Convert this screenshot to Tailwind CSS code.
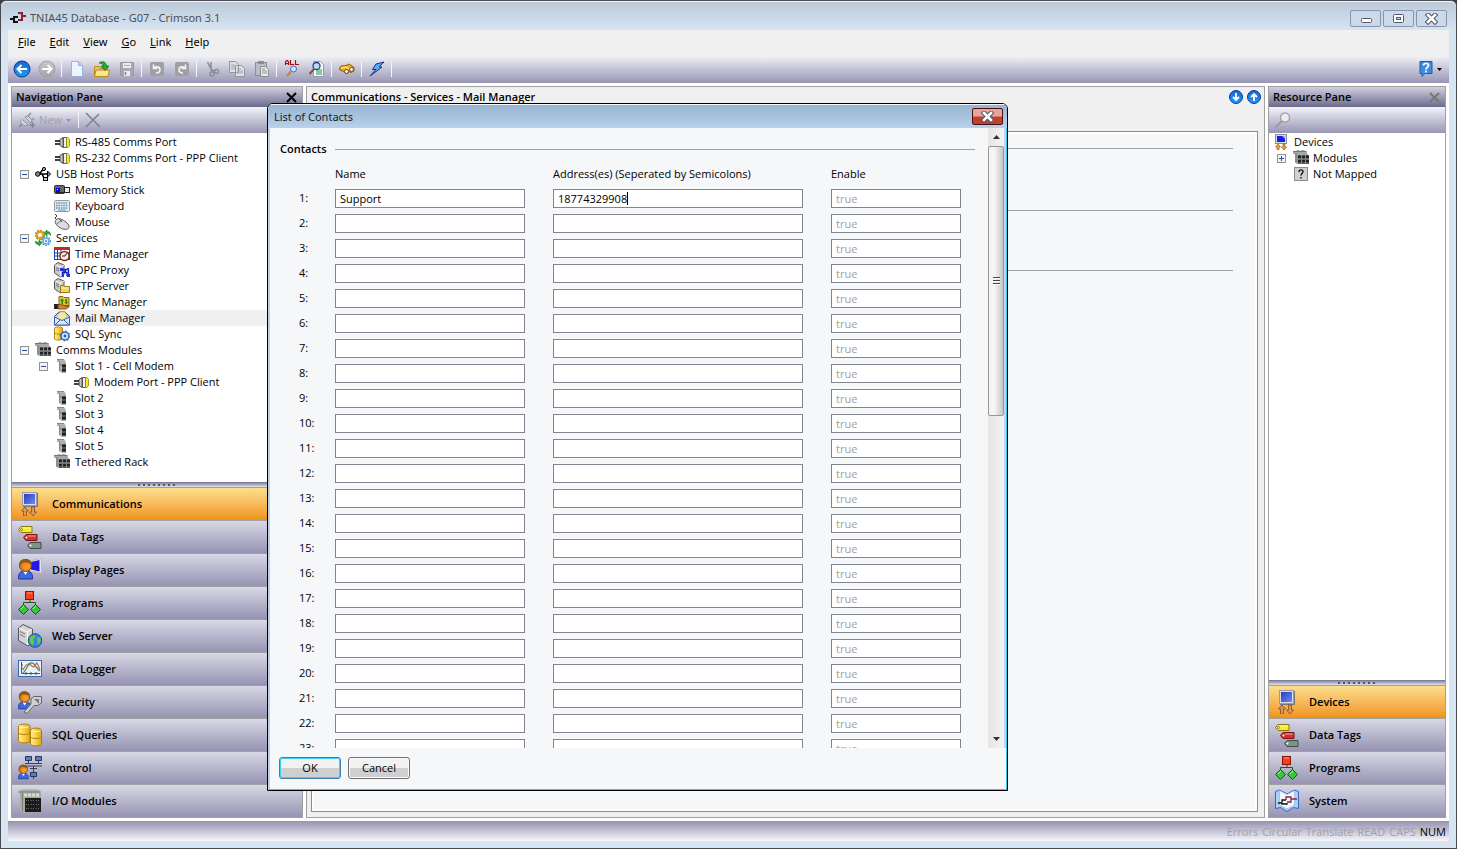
<!DOCTYPE html>
<html lang="en">
<head>
    <meta charset="UTF-8">
    <meta name="viewport" content="width=device-width, initial-scale=1.0">
    <title>TNIA45 Database - G07 - Crimson 3.1</title>
    <script src="https://cdn.jsdelivr.net/npm/@tailwindcss/browser@4"></script>
</head>
<body class="h-screen overflow-hidden bg-[#3c3c44] font-['Open_Sans','Noto_Sans',sans-serif] text-[11px] leading-4 text-black">

    <!-- Icon sprite -->
    <svg class="absolute size-0" aria-hidden="true">
        <defs>
            <linearGradient id="gBlue" x1="0" y1="0" x2="0" y2="1"><stop offset="0" stop-color="#1c64d0"/><stop offset="1" stop-color="#1c9cf4"/></linearGradient>
            <linearGradient id="gGold" x1="0" y1="0" x2="1" y2="0"><stop offset="0" stop-color="#fff2a0"/><stop offset=".5" stop-color="#f7cf45"/><stop offset="1" stop-color="#e0a81c"/></linearGradient>
            <linearGradient id="gScreen" x1="0" y1="0" x2="1" y2="1"><stop offset="0" stop-color="#2a3cc0"/><stop offset="1" stop-color="#6b8af4"/></linearGradient>
            <linearGradient id="gGrey" x1="0" y1="0" x2="0" y2="1"><stop offset="0" stop-color="#c8c8c8"/><stop offset="1" stop-color="#a4a4a4"/></linearGradient>
            <radialGradient id="gHead" cx=".6" cy=".6"><stop offset="0" stop-color="#ffa53c"/><stop offset="1" stop-color="#d97a10"/></radialGradient>
        </defs>

        <symbol id="plug" viewBox="0 0 16 16">
            <path d="M1 7h6M1 10h6" stroke="#000" stroke-width="1.500"/>
            <path d="M6 5.500l3-2v10l-3-2z" fill="#c8c8c8" stroke="#333" stroke-width=".8"/>
            <path d="M9.500 3.500h3v10h-3z" fill="#f0f0f0" stroke="#333" stroke-width=".8"/>
            <path d="M12.500 3.500h1.500l1.500 2v6l-1.500 2h-1.500z" fill="#f8e81c" stroke="#8b8424" stroke-width=".8"/>
        </symbol>
        <symbol id="usb" viewBox="0 0 16 16">
            <path d="M2 8h12M4.500 8l3-4h2M7 8l2 4h2" fill="none" stroke="#000" stroke-width="1.500"/>
            <circle cx="2.800" cy="8" r="2.300" fill="#888" stroke="#000"/><circle cx="9" cy="3" r="1.600" fill="#aaa" stroke="#000"/>
            <path d="M12.500 5l3 3-3 3z" fill="#888" stroke="#000"/><rect x="8.500" y="11.500" width="4" height="3" fill="#ccc" stroke="#000"/>
        </symbol>
        <symbol id="stick" viewBox="0 0 16 16">
            <rect x=".5" y="3.500" width="10" height="8" rx="1" fill="#666" stroke="#333"/><path d="M2 10.500h9" stroke="#222"/>
            <rect x="2" y="6" width="4" height="4" fill="#0000f0"/><rect x="3" y="7" width="1" height="1" fill="#fff"/>
            <rect x="10.500" y="5.500" width="5" height="5" fill="#ececec" stroke="#222"/>
        </symbol>
        <symbol id="keyboard" viewBox="0 0 16 16">
            <rect x=".5" y="2.500" width="15" height="11" rx="1" fill="#e4e8ea" stroke="#999"/>
            <path d="M2 5h12M2 7.500h12M2 10h12" stroke="#5aa0c8" stroke-width="1.400" stroke-dasharray="1.600 .8"/><path d="M4 12h8" stroke="#5aa0c8"/>
        </symbol>
        <symbol id="mouse" viewBox="0 0 16 16">
            <path d="M1 0l2 2-2 2 2 2" fill="none" stroke="#333"/>
            <path d="M1.500 6.500C3 4 6 4 9.500 6.500c4 2 6 5 5.500 7s-4 2.500-7.500 1S0 9 1.500 6.500z" fill="#dcdcdc" stroke="#555"/>
            <path d="M2.500 10l6-4M5 5l3 3" stroke="#777" fill="none"/>
        </symbol>
        <symbol id="gears" viewBox="0 0 16 16">
            <circle cx="5" cy="5" r="3.300" fill="none" stroke="#d8a32c" stroke-width="2.400"/><circle cx="5" cy="5" r="4.700" fill="none" stroke="#b8840c" stroke-width="1.200" stroke-dasharray="1.800 1.300"/>
            <circle cx="11" cy="11" r="3" fill="#e4f2fc" stroke="#6aacdc" stroke-width="1.500"/><circle cx="11" cy="11" r="4.400" fill="none" stroke="#4a90cc" stroke-width="1.200" stroke-dasharray="1.700 1.200"/><circle cx="11" cy="11" r="1" fill="#4a90cc"/>
            <path d="M9 3l3-3v1.500c2 0 4 .5 3.500 4C14.500 4 13.500 3.500 12 4v2z" fill="#2cac2c" stroke="#0a6a0a" stroke-width=".5"/>
            <path d="M7 13l-3 3v-1.500C2 14.500 0 14 .5 11 1.500 12 2.500 12.500 4 12v-2z" fill="#2cac2c" stroke="#0a6a0a" stroke-width=".5"/>
        </symbol>
        <symbol id="calendar" viewBox="0 0 16 16">
            <rect x=".5" y="1.500" width="15" height="12" fill="#fff" stroke="#1a3fa8"/><rect x="0" y="1" width="16" height="3" fill="#c82818"/>
            <path d="M0 7h15M0 10h15M3.500 4v9M7 4v9" stroke="#1a3fa8"/>
            <circle cx="10.500" cy="10" r="4.600" fill="#f4ece8" stroke="#8a2a1a" stroke-width="1.500"/><path d="M8 10h3l2-3" stroke="#222" fill="none"/>
        </symbol>
        <symbol id="tower" viewBox="0 0 16 16">
            <path d="M.5 3L4 .5l6 2.500v9.500L6.500 15l-6-4z" fill="#c8c8c8" stroke="#555"/><path d="M6.500 5v9.500M1 3l5.500 2L10 3" stroke="#f4f4f4" fill="none"/><path d="M2 5.500l3 1.500M2 7.500l3 1.500" stroke="#777"/>
        </symbol>
        <symbol id="opc" viewBox="0 0 16 16">
            <use href="#tower"/>
            <path d="M7 7.500h3v3h3v3h2.500M8.500 13.500v-3h3v-3h3v5" fill="none" stroke="#1020c0" stroke-width="1.300"/>
            <path d="M6 6h3v3H6zM13 12h3v3h-3zM8 12h2v3H8zM13 6h2v2h-2z" fill="#2030e0"/>
        </symbol>
        <symbol id="ftp" viewBox="0 0 16 16">
            <use href="#tower"/><path d="M6.500 7.500h3l1 1h5v6h-9z" fill="#f2d458" stroke="#9a7a14"/><path d="M7 10h8" stroke="#fff2a8"/>
        </symbol>
        <symbol id="sync" viewBox="0 0 16 16">
            <path d="M5 2.500h4l1 1h5v8H5z" fill="#f0bc28" stroke="#8a6a10"/>
            <path d="M8 4.500l2 2.500H9v3H7.500V7H6zM12.500 10.500l-2-2.500h1V5H13v3h1z" fill="#148a28"/>
            <path d="M0 10h4v5H0z" fill="#222"/><path d="M4 10.500l5 .5 3 1.500 3-1v1.500l-3 2H4z" fill="#c88a3c" stroke="#6a3a10" stroke-width=".8"/>
        </symbol>
        <symbol id="mail" viewBox="0 0 16 16">
            <path d="M.5 6.500L5 2h6l4.500 4.500v8.500H.5z" fill="#c8dcf4" stroke="#2e4e96"/>
            <path d="M3 6l3-4h5l2 4v2l-5 3-5-3z" fill="#f4e8a4" stroke="#b4a45c" stroke-width=".6"/>
            <path d="M.5 7L8 10.500 15.500 7v8H.5z" fill="#d8e8fa" stroke="#3a62b0"/><path d="M1 15l5-5M15 15l-5-5" stroke="#3a62b0"/>
        </symbol>
        <symbol id="sqlsync" viewBox="0 0 16 16">
            <path d="M.5 2C2 .5 7 .5 8.500 2V13C7 14.500 2 14.500 .5 13z" fill="url(#gGold)" stroke="#b8860c"/><path d="M.5 7c2 1.500 6 1.500 8 0" fill="none" stroke="#b8860c"/>
            <circle cx="11" cy="10" r="4" fill="#cfe4fa" stroke="#2860b4" stroke-width="1.500"/><circle cx="11" cy="10" r="1.400" fill="#2860b4"/><circle cx="11" cy="10" r="5" fill="none" stroke="#2860b4" stroke-dasharray="1.500 2.400"/>
        </symbol>
        <symbol id="rack" viewBox="0 0 16 16">
            <path d="M0 1h3l1-1h2l1 1 2-1h2l1 1h2v3h1v10H4l-2-2V4H0z" fill="#a8a8a8"/><path d="M0 1.500h13M3 3v10" stroke="#777"/><path d="M5 5h11v9H5z" fill="#555"/>
            <path d="M5 7h3M9 7h3M13 7h3M5 11h3M9 11h3M13 11h3" stroke="#222" stroke-width="2"/><path d="M8.500 5v9M12.500 5v9M5 9h11" stroke="#888"/><path d="M4 4v8" stroke="#6a9a7a"/>
        </symbol>
        <symbol id="slot" viewBox="0 0 16 16">
            <path d="M3 1h7l2 3v11H8l-3-2V4H3z" fill="#b0b0b0"/><path d="M3 1.500h7M5.500 3v10" stroke="#888"/><path d="M8 6h4v8H8z" fill="#555"/><path d="M8 8h4M8 12h4" stroke="#222" stroke-width="2"/><path d="M7 6v2" stroke="#3a9a5a"/>
        </symbol>
        <symbol id="devices16" viewBox="0 0 16 16">
            <rect x="1.500" y=".5" width="11" height="9" fill="#d8dcf0" stroke="#8a8a9c"/><rect x="3" y="2" width="8" height="6" fill="#1820e0"/><path d="M8 2h3v3z" fill="#8aa4f8"/>
            <path d="M4 10l2.500 3H5v3H3v-3H1.500zM10 16l-2.500-3H9v-3h2v3h1.500z" fill="#f4a83c" stroke="#a4580c" stroke-width=".7"/>
        </symbol>
        <symbol id="unmapped" viewBox="0 0 16 16">
            <rect x="1.500" y="1.500" width="13" height="13" fill="#d0d0d0" stroke="#8c8c8c"/><path d="M6 6c0-3 4-2.600 4-.5S8 7.500 8 9.500M8 11v1.500" fill="none" stroke="#111" stroke-width="1.400"/>
        </symbol>

        <symbol id="comms" viewBox="0 0 24 24">
            <rect x="4.500" y=".5" width="14" height="13" fill="#dcdce4" stroke="#9c9ca8"/><rect x="6" y="2" width="11" height="10" fill="url(#gScreen)"/><path d="M19.500 1v13.500H5" fill="none" stroke="#777"/>
            <path d="M7 15l3.500 4H8.500v5h-3v-5h-2zM15 24l-3.500-4h2v-5h3v5h2z" fill="#d89a5c" stroke="#8a4a24" stroke-width=".8"/>
        </symbol>
        <symbol id="tags" viewBox="0 0 24 24">
            <path d="M.5 4.500L3 1.500h11v6H3z" fill="#f8ec28" stroke="#8a7a10"/><path d="M5.500 12.500l2.500-3h11v6H8z" fill="#dc2c2c" stroke="#7a1414"/><path d="M9.500 20.500l2.500-3h11v6H12z" fill="#7c9484" stroke="#3e4e44"/>
            <path d="M5 3h8M10 11h8" stroke="#fff" stroke-opacity=".6"/><circle cx="3.500" cy="4.500" r="1" fill="#fff" stroke="#333" stroke-width=".6"/><circle cx="8.500" cy="12.500" r="1" fill="#fff"/><circle cx="12.500" cy="20.500" r="1" fill="#fff"/>
        </symbol>
        <symbol id="person" viewBox="0 0 24 24">
            <path d="M.5 21c-.5-5 1.500-7.500 5-8h4c3.500.5 5.500 3 5 8z" fill="#3c68e4" stroke="#1c3890"/><path d="M5 13l2.500 4 2.500-4z" fill="#fff"/>
            <circle cx="7.500" cy="7.500" r="6" fill="url(#gHead)" stroke="#7a4408"/><path d="M1.500 9C0 3 4 .8 8 1s6 3 5.500 5C10 5 6 3.500 4 5S3 8 1.500 9z" fill="#8a5a18"/>
        </symbol>
        <symbol id="display" viewBox="0 0 24 24"><path d="M12 3l11.500-2.500V15L12 13z" fill="#e8e8f0" stroke="#bbb"/><path d="M13 4l8.500-2v11.500l-8.500-2z" fill="#2418e8"/><use href="#person"/></symbol>
        <symbol id="programs" viewBox="0 0 24 24">
            <path d="M12 8v3.500M5.500 15v-3.500h12V15" fill="none" stroke="#1c5c1c"/><rect x="7.500" y=".5" width="8" height="8" fill="#f4401c" stroke="#8a1408"/><path d="M9 2h5" stroke="#ff9a7a"/>
            <path d="M5.500 13.500l5 5-5 5-5-5zM17.500 13.500l5 5-5 5-5-5z" fill="#3cc43c" stroke="#0c5c0c"/><path d="M3 18l3-3M15 18l3-3" stroke="#b0f4a0"/>
        </symbol>
        <symbol id="web" viewBox="0 0 24 24">
            <path d="M.5 4L5 .5 14.500 5V18L10 22 .5 16.500z" fill="#d4d4d4" stroke="#555"/><path d="M1 4l8.500 4L14 5M9.500 8v13" fill="none" stroke="#fff"/><path d="M2 7.500l5 2.500M2 10.500L7 13" stroke="#777"/>
            <circle cx="17" cy="16.500" r="6.800" fill="#3c84e4" stroke="#1c4c9c"/><path d="M12 13l4-2 2 1.500-3 3 1 2-1 4-3-3zM19 14l3.500-1v5l-2.500 3z" fill="#5cd03c"/>
        </symbol>
        <symbol id="chart" viewBox="0 0 24 24">
            <rect x=".5" y="3.500" width="23" height="16" fill="#e8f2fc" stroke="#3c68b0"/><path d="M3.500 5v11.500H22" fill="none" stroke="#555"/><path d="M3 8h2M3 12h2M8 15v3M13 15v3M18 15v3" stroke="#555"/>
            <path d="M5 13c3-7 6-7 9-4s4-4 5-3 2 5 3 7" fill="none" stroke="#e06060" stroke-width="1.300"/><path d="M5 16c4-3 4-9 8-10s5 6 9 8" fill="none" stroke="#409850" stroke-width="1.300"/>
        </symbol>
        <symbol id="security" viewBox="0 0 24 24">
            <svg width="21" height="22" viewBox="0 0 24 24"><use href="#person"/></svg>
            <path d="M13 9l3-2.500h7.500V13L20 15.500h-4l-7 8-3-1.500 7-8z" fill="#d0d0d0" stroke="#666"/><path d="M16 9h5v5z" fill="#777"/>
        </symbol>
        <symbol id="queries" viewBox="0 0 24 24">
            <path d="M.5 3C2 .5 10.500 .5 12 3v15C10.500 20.500 2 20.500 .5 18z" fill="url(#gGold)" stroke="#b07c08"/><path d="M.5 10c2 2 9 2 11.500 0" fill="none" stroke="#b07c08"/><path d="M1.500 3.500c2 1.500 7 1.500 9.500 0" fill="none" stroke="#fff6c0"/>
            <path d="M12.500 7c1.500-2.500 9.500-2.500 11 0v14c-1.500 2.500-9.500 2.500-11 0z" fill="url(#gGold)" stroke="#b07c08"/><path d="M12.500 14c2 2 9 2 11 0" fill="none" stroke="#b07c08"/><path d="M13.500 7.500c2 1.500 7 1.500 9 0" fill="none" stroke="#fff6c0"/>
        </symbol>
        <symbol id="control" viewBox="0 0 24 24">
            <path d="M7 7.500h17M7 10h17M10.500 5v2.500M20.500 5v2.500M15.500 10v7M15.500 20v3M12 12.500h7" stroke="#33415c"/>
            <path d="M7.500 .5h6v4h-6zM17.500 .5h6v4h-6zM12.500 16.500h6v4h-6z" fill="#5c7cc4" stroke="#26365c"/>
            <svg y="8" width="17" height="17" viewBox="0 0 24 24"><use href="#person"/></svg>
        </symbol>
        <symbol id="io" viewBox="0 0 24 24">
            <path d="M0 2l4-1.500h16l3 2V23L6 24l-4-2V4H0z" fill="#a8aca0"/><path d="M1 3h21M4.500 4v18" stroke="#7a7e74"/><path d="M7 9h16v14H7z" fill="#1c1c1c"/>
            <path d="M8 11.500h3M13 11.500h3M18 11.500h3M8 15.500h3M13 15.500h3M18 15.500h3M8 19.500h3M13 19.500h3M18 19.500h3" stroke="#666" stroke-dasharray="1 1"/><path d="M6 6h16" stroke="#d8dcd0" stroke-width="3" stroke-dasharray="3 1"/>
        </symbol>
        <symbol id="system" viewBox="0 0 24 24">
            <path d="M.5 2.500l4-1.500 7.500 4L19.500 1l4 1.500v17l-5-1-6.500 4-6.500-4-5 1z" fill="#a8d0f8" stroke="#3468c0"/><path d="M4.500 1.500v14.500l7.500 4 7.500-4V1.500l-7.500 4z" fill="#f4f8fe" stroke="#88a8e0" stroke-width=".6"/>
            <path d="M3 14h4M12 14v1H7v-4h4" fill="none" stroke="#111" stroke-width="1.300"/><path d="M11 11V8h5v5h-4M16 10h6" fill="none" stroke="#8c2434" stroke-width="1.300"/>
        </symbol>
    </svg>

    <!-- Application window -->
    <div class="flex h-screen flex-col rounded-t-md border border-[#4a4a52] bg-[#d7e4f2] px-[7px] pb-[7px]">

        <!-- Title bar -->
        <header class="-mx-[7px] flex h-[29px] shrink-0 items-start rounded-t-md border-t border-white/70 bg-linear-to-b from-[#bccad9] to-[#d7e4f2] pl-[9px] pr-[9px]">
            <svg class="mt-2 h-4 w-4" viewBox="0 0 16 16" aria-hidden="true">
                <path d="M0 9h4M8 12H4V7h4" fill="none" stroke="#111" stroke-width="2"/>
                <path d="M12 6h4M8 3h4v7H8" fill="none" stroke="#8c2030" stroke-width="2"/>
            </svg>
            <h1 class="ml-1 mt-2 font-['Noto_Sans'] text-[#4c5058]">TNIA45 Database - G07 - Crimson 3.1</h1>
            <div class="ml-auto mt-2 flex gap-[2px]">
                <button type="button" aria-label="Minimize" class="flex h-[17px] w-[31px] items-center justify-center rounded-xs border border-[#8795ae] bg-[#ccd9e8]">
                    <svg class="h-3 w-4" viewBox="0 0 16 12"><rect x="3.500" y="5.500" width="10" height="4" rx="1" fill="#fff" stroke="#55586c"/></svg>
                </button>
                <button type="button" aria-label="Maximize" class="flex h-[17px] w-[31px] items-center justify-center rounded-xs border border-[#8795ae] bg-[#ccd9e8]">
                    <svg class="h-3 w-4" viewBox="0 0 16 12"><rect x="2.500" y="1.500" width="10" height="8" rx="1" fill="#fff" stroke="#55586c"/><rect x="5.500" y="4.500" width="4" height="2" fill="#ccd9e8" stroke="#55586c"/></svg>
                </button>
                <button type="button" aria-label="Close" class="flex h-[17px] w-[31px] items-center justify-center rounded-xs border border-[#8795ae] bg-[#ccd9e8]">
                    <svg class="h-3 w-4" viewBox="0 0 16 12"><path d="M4 2l7 7M11 2l-7 7" stroke="#55586c" stroke-width="4.600" stroke-linecap="square"/><path d="M4 2l7 7M11 2l-7 7" stroke="#fff" stroke-width="2.600" stroke-linecap="square"/></svg>
                </button>
            </div>
        </header>

        <!-- Menu bar -->
        <nav class="flex h-[25px] shrink-0 items-center bg-[#f0f0f0] pb-px pl-[3px] font-['Noto_Sans']">
            <button type="button" class="px-[7px]"><u>F</u>ile</button>
            <button type="button" class="px-[7px]"><u>E</u>dit</button>
            <button type="button" class="px-[7px]"><u>V</u>iew</button>
            <button type="button" class="px-[7px]"><u>G</u>o</button>
            <button type="button" class="px-[7px]"><u>L</u>ink</button>
            <button type="button" class="px-[7px]"><u>H</u>elp</button>
        </nav>

        <!-- Toolbar -->
        <div class="flex h-[28px] shrink-0 items-center bg-linear-to-b from-[#f4f4fa] to-[#9896b4] pl-[1px] pr-[7px]">
            <button type="button" aria-label="Back" class="flex w-[25px] justify-center">
                <svg class="size-[18px]" viewBox="0 0 18 18"><circle cx="9" cy="9" r="8" fill="url(#gBlue)" stroke="#0a3c9c"/><path d="M14 9H5M8.500 5L4.500 9l4 4" fill="none" stroke="#fff" stroke-width="2"/></svg>
            </button>
            <button type="button" aria-label="Forward" class="flex w-[25px] justify-center">
                <svg class="size-[18px]" viewBox="0 0 18 18"><circle cx="9" cy="9" r="8" fill="url(#gGrey)" stroke="#a0a0a8"/><path d="M4 9h9M9.500 5l4 4-4 4" fill="none" stroke="#fff" stroke-width="2"/></svg>
            </button>
            <span class="mx-[2px] h-4 w-px bg-[#f4f4fa]"></span>
            <button type="button" aria-label="New" class="flex w-[25px] justify-center">
                <svg class="size-4" viewBox="0 0 16 16"><path d="M2.500.5h7l4 4v11h-11z" fill="#eef4fe" stroke="#98b4dc"/><path d="M9.500.5v4h4" fill="#b8d0f0" stroke="#98b4dc"/></svg>
            </button>
            <button type="button" aria-label="Open" class="flex w-[25px] justify-center">
                <svg class="size-4" viewBox="0 0 16 16"><path d="M.5 5.500h5l1 2h7v8H.5z" fill="#f0c850" stroke="#b88a20"/><path d="M.5 15.500l1.500-6.500h13.500L14 15.500z" fill="#fae48c" stroke="#b88a20"/><path d="M5 2c4-2.500 7-1 7.500 3h2.500l-4 4.500L7 5h2.500C9 3 7.500 2 5 2z" fill="#2cac2c" stroke="#0c6a14" stroke-width=".7"/></svg>
            </button>
            <button type="button" aria-label="Save" class="flex w-[25px] justify-center">
                <svg class="size-4" viewBox="0 0 16 16"><path d="M1.500 1.500h13v13h-13z" fill="#a8a8ae" stroke="#98989f"/><path d="M4 2h8v5H4zM5 10h6v5H5z" fill="#ececf0"/><path d="M5 4.500h6" stroke="#aaa"/><path d="M6.500 11v3" stroke="#888" stroke-width="1.500"/></svg>
            </button>
            <span class="mx-[2px] h-4 w-px bg-[#f4f4fa]"></span>
            <button type="button" aria-label="Undo" class="flex w-[25px] justify-center">
                <svg class="size-4" viewBox="0 0 16 16"><rect x="1" y="1" width="14" height="14" rx="2" fill="#a0a0a4"/><path d="M4.500 3.500v4h4M5 7c3-2.500 6-1 6 1.500S9.500 12 7 12" fill="none" stroke="#f4f4f8" stroke-width="1.600"/></svg>
            </button>
            <button type="button" aria-label="Redo" class="flex w-[25px] justify-center">
                <svg class="size-4" viewBox="0 0 16 16"><rect x="1" y="1" width="14" height="14" rx="2" fill="#a0a0a4"/><path d="M11.500 3.500v4h-4M11 7C8 4.500 5 6 5 8.500S6.500 12 9 12" fill="none" stroke="#f4f4f8" stroke-width="1.600"/></svg>
            </button>
            <span class="mx-[2px] h-4 w-px bg-[#f4f4fa]"></span>
            <button type="button" aria-label="Cut" class="flex w-[25px] justify-center">
                <svg class="size-4" viewBox="0 0 16 16"><path d="M3.500 1l5 10M7 1v8l4 1" fill="none" stroke="#8c8c94" stroke-width="1.600"/><circle cx="8" cy="13" r="2" fill="none" stroke="#8c8c94" stroke-width="1.500"/><circle cx="12.500" cy="10.500" r="2" fill="none" stroke="#8c8c94" stroke-width="1.500"/></svg>
            </button>
            <button type="button" aria-label="Copy" class="flex w-[25px] justify-center">
                <svg class="size-4" viewBox="0 0 16 16"><path d="M.5.5h6l3 3v8h-9zM6.500 4.500h6l3 3v8h-9z" fill="#e0e0e6" stroke="#94949c"/><path d="M2 4h4M2 6h4M2 8h4M8 8h4M8 10h6M8 12h6" stroke="#a4a4ac"/></svg>
            </button>
            <button type="button" aria-label="Paste" class="flex w-[25px] justify-center">
                <svg class="size-4" viewBox="0 0 16 16"><rect x="1.500" y="1.500" width="11" height="13" fill="#bcbcc4" stroke="#8c8c94"/><rect x="4" y="0" width="6" height="3" fill="#8c8c94"/><path d="M6.500 5.500h5l3 3v7h-8z" fill="#e8e8ee" stroke="#8c8c94"/><path d="M8 8h3M8 10h5M8 12h5" stroke="#94949c"/></svg>
            </button>
            <span class="mx-[2px] h-4 w-px bg-[#f4f4fa]"></span>
            <button type="button" aria-label="Find all" class="flex w-[25px] justify-center">
                <svg class="size-4 overflow-visible" viewBox="0 0 16 16"><path d="M1.500 4V1l1-1.500h1l1 1.500v3M1.500 2.500h3M6.500-1v4.500H10M11.500-1v4.500H15" fill="none" stroke="#a01010" stroke-width="1.200"/><circle cx="9.500" cy="8" r="3" fill="#cfe8fc" stroke="#3c70c0"/><path d="M7 10.500l-4 4.500" stroke="#c8803c" stroke-width="2"/></svg>
            </button>
            <button type="button" aria-label="Find in document" class="flex w-[25px] justify-center">
                <svg class="size-4" viewBox="0 0 16 16"><path d="M4.500.5h7l3 3v12h-10z" fill="#f4f8fc" stroke="#8c9cb0"/><path d="M7 9h6M7 11h6M7 13h6" stroke="#1c9c3c"/><circle cx="7.500" cy="5" r="3.500" fill="#bcd8f4" stroke="#26467c" stroke-width="1.300"/><path d="M5 8l-4.500 5" stroke="#7a5a3c" stroke-width="2"/></svg>
            </button>
            <span class="mx-[2px] h-4 w-px bg-[#f4f4fa]"></span>
            <button type="button" aria-label="Browse" class="flex w-[25px] justify-center">
                <svg class="size-4" viewBox="0 0 16 16"><path d="M.5 7L2 5l5-.500L10 3l5 3.500v3.500l-3 1.500-2-1-2 2.500-3-2.500L1 9z" fill="#f0b028" stroke="#8a5c08"/><path d="M2 7l4-1 4 1.500" stroke="#fff0a0" fill="none"/><ellipse cx="12.500" cy="8.500" rx="2" ry="2" fill="#e8f0fc" stroke="#7a4c08"/><circle cx="7.500" cy="10.500" r="2" fill="#e8f0fc" stroke="#7a4c08"/></svg>
            </button>
            <span class="mx-[2px] h-4 w-px bg-[#f4f4fa]"></span>
            <button type="button" aria-label="Download" class="flex w-[25px] justify-center">
                <svg class="size-4" viewBox="0 0 16 16"><path d="M7 3l8-2-5 5h3L1 15l6-6.500H3.500z" fill="#5cacf4" stroke="#12308c"/></svg>
            </button>
            <span class="mx-[2px] h-4 w-px bg-[#f4f4fa]"></span>
            <button type="button" aria-label="Help" class="ml-auto flex items-center gap-[3px]">
                <svg class="size-4" viewBox="0 0 16 16"><path d="M2 .5h12v12H7l-3 3v-3H2z" fill="#3c8ce0" stroke="#1c5cb0"/><path d="M5.500 4.500c0-3 5-2.800 5 0 0 2-2.500 1.800-2.500 4M8 9.500v2" fill="none" stroke="#fff" stroke-width="1.800"/></svg>
                <svg class="h-[3px] w-[5px]" viewBox="0 0 5 3"><path d="M0 0h5L2.500 3z"/></svg>
            </button>
        </div>

        <!-- Panes -->
        <main class="flex min-h-0 flex-1 gap-[3px] bg-white px-[3px] py-[3px]">

            <!-- Navigation pane -->
            <aside class="flex w-[292px] shrink-0 flex-col border border-[#a0a0a0]">
                <div class="flex h-5 shrink-0 items-center justify-between bg-linear-to-b from-[#d2d1e0] to-[#6d6b8d] pl-1 pr-[5px]">
                    <h2 class="font-semibold">Navigation Pane</h2>
                    <button type="button" aria-label="Close navigation pane"><svg class="size-[11px]" viewBox="0 0 11 11"><path d="M1 1l9 9M10 1l-9 9" stroke="#000" stroke-width="2"/></svg></button>
                </div>
                <div class="flex h-[26px] shrink-0 items-center bg-linear-to-b from-[#f4f4fa] to-[#9896b4] pl-[7px] text-[#a0a0a8]">
                    <button type="button" class="flex items-center gap-1">
                        <svg class="size-4" viewBox="0 0 16 16" aria-hidden="true"><path d="M0 15l3-3" stroke="#94949c" stroke-width="2"/><path d="M3.500 7.500l5.500 5.500c-2 1-4 1-6-1s-1-3.500.5-4.500zM6 5l6 6 1-3-4-4z" fill="#d4d4dc" stroke="#94949c"/><path d="M9 4l3-3M13 8l2-2" stroke="#94949c" stroke-width="1.600"/><path d="M13.500 10v6M10.500 13h6" stroke="#84848c" stroke-width="1.400"/></svg>
                        New
                        <svg class="h-[3px] w-[5px]" viewBox="0 0 5 3" aria-hidden="true"><path d="M0 0h5L2.500 3z" fill="#94949c"/></svg>
                    </button>
                    <span class="mr-[6px] ml-[7px] h-4 w-px bg-[#f4f4fa]"></span>
                    <button type="button" aria-label="Delete"><svg class="size-4" viewBox="0 0 16 16"><path d="M1 1l14 14M14 2L1 15" stroke="#84848c" stroke-width="1.700"/></svg></button>
                </div>

                <ul class="min-h-0 flex-1 overflow-hidden bg-white pt-px">
                    <li class="flex h-4 items-center gap-[5px] pl-[42px]"><svg class="size-4"><use href="#plug"/></svg>RS-485 Comms Port</li>
                    <li class="flex h-4 items-center gap-[5px] pl-[42px]"><svg class="size-4"><use href="#plug"/></svg>RS-232 Comms Port - PPP Client</li>
                    <li class="flex h-4 items-center gap-[5px] pl-[8px]"><button type="button" aria-label="Collapse USB Host Ports" class="mr-px size-[9px]"><svg class="size-[9px]" viewBox="0 0 9 9"><rect x=".5" y=".5" width="8" height="8" fill="#f4f4f4" stroke="#919191"/><path d="M2 4.500h5" stroke="#2c4c9c"/></svg></button><svg class="size-4"><use href="#usb"/></svg>USB Host Ports</li>
                    <li class="flex h-4 items-center gap-[5px] pl-[42px]"><svg class="size-4"><use href="#stick"/></svg>Memory Stick</li>
                    <li class="flex h-4 items-center gap-[5px] pl-[42px]"><svg class="size-4"><use href="#keyboard"/></svg>Keyboard</li>
                    <li class="flex h-4 items-center gap-[5px] pl-[42px]"><svg class="size-4"><use href="#mouse"/></svg>Mouse</li>
                    <li class="flex h-4 items-center gap-[5px] pl-[8px]"><button type="button" aria-label="Collapse Services" class="mr-px size-[9px]"><svg class="size-[9px]" viewBox="0 0 9 9"><rect x=".5" y=".5" width="8" height="8" fill="#f4f4f4" stroke="#919191"/><path d="M2 4.500h5" stroke="#2c4c9c"/></svg></button><svg class="size-4"><use href="#gears"/></svg>Services</li>
                    <li class="flex h-4 items-center gap-[5px] pl-[42px]"><svg class="size-4"><use href="#calendar"/></svg>Time Manager</li>
                    <li class="flex h-4 items-center gap-[5px] pl-[42px]"><svg class="size-4"><use href="#opc"/></svg>OPC Proxy</li>
                    <li class="flex h-4 items-center gap-[5px] pl-[42px]"><svg class="size-4"><use href="#ftp"/></svg>FTP Server</li>
                    <li class="flex h-4 items-center gap-[5px] pl-[42px]"><svg class="size-4"><use href="#sync"/></svg>Sync Manager</li>
                    <li class="flex h-4 items-center gap-[5px] bg-[#f0f0f0] pl-[42px]"><svg class="size-4"><use href="#mail"/></svg>Mail Manager</li>
                    <li class="flex h-4 items-center gap-[5px] pl-[42px]"><svg class="size-4"><use href="#sqlsync"/></svg>SQL Sync</li>
                    <li class="flex h-4 items-center gap-[5px] pl-[8px]"><button type="button" aria-label="Collapse Comms Modules" class="mr-px size-[9px]"><svg class="size-[9px]" viewBox="0 0 9 9"><rect x=".5" y=".5" width="8" height="8" fill="#f4f4f4" stroke="#919191"/><path d="M2 4.500h5" stroke="#2c4c9c"/></svg></button><svg class="size-4"><use href="#rack"/></svg>Comms Modules</li>
                    <li class="flex h-4 items-center gap-[5px] pl-[27px]"><button type="button" aria-label="Collapse Slot 1" class="mr-px size-[9px]"><svg class="size-[9px]" viewBox="0 0 9 9"><rect x=".5" y=".5" width="8" height="8" fill="#f4f4f4" stroke="#919191"/><path d="M2 4.500h5" stroke="#2c4c9c"/></svg></button><svg class="size-4"><use href="#slot"/></svg>Slot 1 - Cell Modem</li>
                    <li class="flex h-4 items-center gap-[5px] pl-[61px]"><svg class="size-4"><use href="#plug"/></svg>Modem Port - PPP Client</li>
                    <li class="flex h-4 items-center gap-[5px] pl-[42px]"><svg class="size-4"><use href="#slot"/></svg>Slot 2</li>
                    <li class="flex h-4 items-center gap-[5px] pl-[42px]"><svg class="size-4"><use href="#slot"/></svg>Slot 3</li>
                    <li class="flex h-4 items-center gap-[5px] pl-[42px]"><svg class="size-4"><use href="#slot"/></svg>Slot 4</li>
                    <li class="flex h-4 items-center gap-[5px] pl-[42px]"><svg class="size-4"><use href="#slot"/></svg>Slot 5</li>
                    <li class="flex h-4 items-center gap-[5px] pl-[42px]"><svg class="size-4"><use href="#rack"/></svg>Tethered Rack</li>
                </ul>

                <div class="flex h-[6px] shrink-0 items-center justify-center border-b border-[#a0a0a0] bg-linear-to-b from-[#75738f] to-[#e4e4ee]">
                    <svg class="h-[2px] w-[38px]" viewBox="0 0 38 2" aria-hidden="true"><path d="M0 1h38" stroke="#555" stroke-width="2" stroke-dasharray="2 3"/></svg>
                </div>
                <div class="shrink-0 font-semibold">
                    <button type="button" class="flex h-[33px] w-full items-center gap-[10px] border-b border-[#a0a0a0] bg-linear-to-b from-[#fbdf8c] to-[#f0930f] pl-[6px]"><svg class="size-6"><use href="#comms"/></svg>Communications</button>
                    <button type="button" class="flex h-[33px] w-full items-center gap-[10px] border-b border-[#a0a0a0] bg-linear-to-b from-[#d8d8e6] to-[#9694b2] pl-[6px]"><svg class="size-6"><use href="#tags"/></svg>Data Tags</button>
                    <button type="button" class="flex h-[33px] w-full items-center gap-[10px] border-b border-[#a0a0a0] bg-linear-to-b from-[#d8d8e6] to-[#9694b2] pl-[6px]"><svg class="size-6"><use href="#display"/></svg>Display Pages</button>
                    <button type="button" class="flex h-[33px] w-full items-center gap-[10px] border-b border-[#a0a0a0] bg-linear-to-b from-[#d8d8e6] to-[#9694b2] pl-[6px]"><svg class="size-6"><use href="#programs"/></svg>Programs</button>
                    <button type="button" class="flex h-[33px] w-full items-center gap-[10px] border-b border-[#a0a0a0] bg-linear-to-b from-[#d8d8e6] to-[#9694b2] pl-[6px]"><svg class="size-6"><use href="#web"/></svg>Web Server</button>
                    <button type="button" class="flex h-[33px] w-full items-center gap-[10px] border-b border-[#a0a0a0] bg-linear-to-b from-[#d8d8e6] to-[#9694b2] pl-[6px]"><svg class="size-6"><use href="#chart"/></svg>Data Logger</button>
                    <button type="button" class="flex h-[33px] w-full items-center gap-[10px] border-b border-[#a0a0a0] bg-linear-to-b from-[#d8d8e6] to-[#9694b2] pl-[6px]"><svg class="size-6"><use href="#security"/></svg>Security</button>
                    <button type="button" class="flex h-[33px] w-full items-center gap-[10px] border-b border-[#a0a0a0] bg-linear-to-b from-[#d8d8e6] to-[#9694b2] pl-[6px]"><svg class="size-6"><use href="#queries"/></svg>SQL Queries</button>
                    <button type="button" class="flex h-[33px] w-full items-center gap-[10px] border-b border-[#a0a0a0] bg-linear-to-b from-[#d8d8e6] to-[#9694b2] pl-[6px]"><svg class="size-6"><use href="#control"/></svg>Control</button>
                    <button type="button" class="flex h-8 w-full items-center gap-[10px] bg-linear-to-b from-[#d8d8e6] to-[#9694b2] pl-[6px]"><svg class="size-6"><use href="#io"/></svg>I/O Modules</button>
                </div>
            </aside>

            <!-- Editor -->
            <section class="flex min-w-0 flex-1 flex-col border border-[#a0a0a0] bg-[#f0f0f0] px-1 pb-[5px]">
                <div class="flex h-5 shrink-0 items-center">
                    <h2 class="font-semibold">Communications - Services - Mail Manager</h2>
                    <button type="button" aria-label="Next item" class="mr-1 ml-auto"><svg class="size-[14px]" viewBox="0 0 14 14"><circle cx="7" cy="7" r="6.500" fill="url(#gBlue)" stroke="#0a3c9c"/><path d="M7 3v7M4 7l3 3 3-3" fill="none" stroke="#fff" stroke-width="1.800"/></svg></button>
                    <button type="button" aria-label="Previous item" class="-mr-px"><svg class="size-[14px]" viewBox="0 0 14 14"><circle cx="7" cy="7" r="6.500" fill="url(#gBlue)" stroke="#0a3c9c"/><path d="M7 11V4M4 7l3-3 3 3" fill="none" stroke="#fff" stroke-width="1.800"/></svg></button>
                </div>
                <div class="mt-6 mr-[2px] flex-1 border border-[#8a8c94] bg-[#f6f7f9] pt-4 pr-6 pl-5 shadow-[inset_0_0_0_2px_#fff]">
                    <hr class="border-[#a0a0a0]">
                    <hr class="mt-[61px] border-[#a0a0a0]">
                    <hr class="mt-[59px] border-[#a0a0a0]">
                </div>
            </section>

            <!-- Resource pane -->
            <aside class="flex w-[178px] shrink-0 flex-col border border-[#a0a0a0]">
                <div class="flex h-5 shrink-0 items-center justify-between bg-linear-to-b from-[#d2d1e0] to-[#6d6b8d] pl-1 pr-[5px]">
                    <h2 class="font-semibold">Resource Pane</h2>
                    <button type="button" aria-label="Close resource pane"><svg class="size-[11px]" viewBox="0 0 11 11"><path d="M1 1l9 9M10 1l-9 9" stroke="#777" stroke-width="2"/></svg></button>
                </div>
                <div class="flex h-[26px] shrink-0 items-center bg-linear-to-b from-[#f4f4fa] to-[#9896b4] pl-[6px]">
                    <button type="button" aria-label="Find"><svg class="size-4" viewBox="0 0 16 16"><circle cx="10" cy="5.500" r="4.500" fill="#ececf2" stroke="#a4a4ac" stroke-width="1.500"/><path d="M7 9l-6.500 6.500" stroke="#94949c" stroke-width="1.600"/></svg></button>
                </div>
                <ul class="min-h-0 flex-1 overflow-hidden bg-white pt-px">
                    <li class="flex h-4 items-center gap-1 pl-[5px]"><svg class="size-4"><use href="#devices16"/></svg>Devices</li>
                    <li class="flex h-4 items-center gap-1 pl-[8px]"><button type="button" aria-label="Expand Modules" class="mr-[3px] size-[9px]"><svg class="size-[9px]" viewBox="0 0 9 9"><rect x=".5" y=".5" width="8" height="8" fill="#f4f4f4" stroke="#919191"/><path d="M2 4.500h5M4.500 2v5" stroke="#2c4c9c"/></svg></button><svg class="size-4"><use href="#rack"/></svg>Modules</li>
                    <li class="flex h-4 items-center gap-1 pl-[24px]"><svg class="size-4"><use href="#unmapped"/></svg>Not Mapped</li>
                </ul>
                <div class="flex h-[6px] shrink-0 items-center justify-center border-b border-[#a0a0a0] bg-linear-to-b from-[#75738f] to-[#e4e4ee]">
                    <svg class="h-[2px] w-[38px]" viewBox="0 0 38 2" aria-hidden="true"><path d="M0 1h38" stroke="#555" stroke-width="2" stroke-dasharray="2 3"/></svg>
                </div>
                <div class="shrink-0 font-semibold">
                    <button type="button" class="flex h-[33px] w-full items-center gap-[10px] border-b border-[#a0a0a0] bg-linear-to-b from-[#fbdf8c] to-[#f0930f] pl-[6px]"><svg class="size-6"><use href="#comms"/></svg>Devices</button>
                    <button type="button" class="flex h-[33px] w-full items-center gap-[10px] border-b border-[#a0a0a0] bg-linear-to-b from-[#d8d8e6] to-[#9694b2] pl-[6px]"><svg class="size-6"><use href="#tags"/></svg>Data Tags</button>
                    <button type="button" class="flex h-[33px] w-full items-center gap-[10px] border-b border-[#a0a0a0] bg-linear-to-b from-[#d8d8e6] to-[#9694b2] pl-[6px]"><svg class="size-6"><use href="#programs"/></svg>Programs</button>
                    <button type="button" class="flex h-8 w-full items-center gap-[10px] bg-linear-to-b from-[#d8d8e6] to-[#9694b2] pl-[6px]"><svg class="size-6"><use href="#system"/></svg>System</button>
                </div>
            </aside>
        </main>

        <!-- Status bar -->
        <footer class="flex h-5 shrink-0 items-center justify-end gap-1 bg-linear-to-b from-[#9593b0] to-[#f6f6fb] pt-px pr-[3px] text-[#a0a0a8]">
            <span>Errors</span>
            <span>Circular</span>
            <span>Translate</span>
            <span>READ</span>
            <span>CAPS</span>
            <span class="text-black">NUM</span>
        </footer>
    </div>

    <!-- Contacts dialog -->
    <div role="dialog" aria-labelledby="dialogTitle" class="absolute left-[267px] top-[103px] flex h-[688px] w-[741px] flex-col overflow-hidden rounded-t-md border border-black bg-[#f6f7f9]">
        <div class="flex h-6 shrink-0 items-start justify-between border-t border-white/80 bg-linear-to-b from-[#98b4d1] to-[#b9d1ea] pl-[6px] pr-[4px]">
            <h2 id="dialogTitle" class="mt-1 font-['Noto_Sans'] text-[#1c1c24]">List of Contacts</h2>
            <button type="button" aria-label="Close dialog" class="mt-[3px] flex h-[17px] w-[31px] items-center justify-center rounded-xs border border-[#4a1018] bg-linear-to-b from-[#e8a498] from-45% to-[#c04028] to-55%">
                <svg class="h-3 w-4" viewBox="0 0 16 12"><path d="M4 2l7 7M11 2l-7 7" stroke="#55586c" stroke-width="4.600" stroke-linecap="square"/><path d="M4 2l7 7M11 2l-7 7" stroke="#fff" stroke-width="2.600" stroke-linecap="square"/></svg>
            </button>
        </div>

        <form class="flex min-h-0 flex-1 flex-col border-r border-b border-l-2 border-r-[#38c8e8] border-b-[#38c8e8] border-l-[#bcd0e8]">
            <div class="flex h-[620px] border-r-2 border-[#c4d4ec]">
                <fieldset class="min-w-0 flex-1 overflow-hidden pl-[10px] pr-[13px]">
                    <div class="mt-[13px] flex h-4 items-center gap-2">
                        <span class="font-semibold">Contacts</span>
                        <hr class="flex-1 border-[#a0a0a0]">
                    </div>
                    <table class="mt-[9px] table-fixed">
                        <thead>
                            <tr class="h-[23px] align-top">
                                <td class="w-[55px]"></td>
                                <th class="w-[218px] text-left font-normal">Name</th>
                                <th class="w-[278px] text-left font-normal">Address(es) (Seperated by Semicolons)</th>
                                <th class="w-[130px] text-left font-normal">Enable</th>
                            </tr>
                        </thead>
                        <tbody id="contacts"></tbody>
                    </table>
                </fieldset>

                <!-- Scroll bar -->
                <div class="flex w-4 shrink-0 flex-col items-center bg-linear-to-r from-[#e6e6e6] to-[#f2f2f2]" aria-hidden="true">
                    <div class="flex h-[18px] items-center"><svg class="h-1 w-[7px]" viewBox="0 0 7 4"><path d="M0 4l3.500-4L7 4z" fill="#333"/></svg></div>
                    <div class="flex h-[270px] w-4 items-center justify-center rounded-xs border border-[#979797] bg-linear-to-r from-[#f5f5f5] from-40% to-[#c6c6cc]">
                        <svg class="h-2 w-[7px]" viewBox="0 0 7 8"><path d="M0 .5h7M0 3.500h7M0 6.500h7" stroke="#444"/><path d="M0 1.500h7M0 4.500h7M0 7.500h7" stroke="#fff"/></svg>
                    </div>
                    <div class="mt-auto flex h-[18px] items-center"><svg class="h-1 w-[7px]" viewBox="0 0 7 4"><path d="M0 0l3.500 4L7 0z" fill="#333"/></svg></div>
                </div>
            </div>

            <div class="flex gap-[7px] pt-[9px] pl-[9px]">
                <button type="button" class="h-[22px] w-[62px] rounded-[3px] border border-[#3c7fb1] bg-linear-to-b from-[#f2f2f2] from-48% to-[#cfcfcf] to-52% shadow-[inset_0_0_0_1px_#3cd0f4]">OK</button>
                <button type="button" class="h-[22px] w-[62px] rounded-[3px] border border-[#707070] bg-linear-to-b from-[#f2f2f2] from-48% to-[#cfcfcf] to-52% shadow-[inset_0_0_0_1px_#fafafa]">Cancel</button>
            </div>
        </form>
    </div>

    <script>
        const contacts = { 1: { name: 'Support', address: '18774329908' } };
        const box = 'block h-[19px] border border-[#82858f] bg-white px-1 pb-px leading-4 outline-none';
        let rows = '';
        for (let i = 1; i <= 23; i++) {
            const c = contacts[i] || { name: '', address: '' };
            rows += `
                <tr class="h-[25px] align-top">
                    <td class="pl-[19px] pt-px"><label for="name${i}">${i}:</label></td>
                    <td><input id="name${i}" type="text" value="${c.name}" class="${box} w-[190px]"></td>
                    <td class="relative">
                        <input id="address${i}" type="text" aria-label="Addresses ${i}" value="${c.address}" class="${box} w-[250px]">
                        ${c.address ? '<span class="absolute top-[3px] left-[74px] h-[13px] w-px bg-black"></span>' : ''}
                    </td>
                    <td><input id="enable${i}" type="text" aria-label="Enable ${i}" value="true" readonly class="${box} w-[130px] text-[#a0a0a0]"></td>
                </tr>`;
        }
        document.getElementById('contacts').innerHTML = rows;
    </script>
</body>
</html>
